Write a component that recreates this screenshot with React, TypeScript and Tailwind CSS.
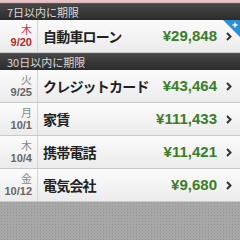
const sections = [
  {
    title: '7日以内に期限',
    items: [{ day: '木', date: '9/20', name: '自動車ローン', amount: '¥29,848', urgent: true }],
  },
  {
    title: '30日以内に期限',
    items: [
      { day: '火', date: '9/25', name: 'クレジットカード', amount: '¥43,464' },
      { day: '月', date: '10/1', name: '家賃', amount: '¥111,433' },
      { day: '木', date: '10/4', name: '携帯電話', amount: '¥11,421' },
      { day: '金', date: '10/12', name: '電気会社', amount: '¥9,680' },
    ],
  },
];

type Item = { day: string; date: string; name: string; amount: string; urgent?: boolean };

function Chevron() {
  return (
    <svg width="6" height="9" viewBox="0 0 6 9" className="shrink-0">
      <polyline points="1,1 4.5,4.5 1,8" fill="none" stroke="#333" strokeWidth="2" />
    </svg>
  );
}

function Row({ item, first }: { item: Item; first: boolean }) {
  return (
    <div className="relative flex h-[33px] border-b border-[#c9c9c9] bg-gradient-to-b from-[#fbfbfb] to-[#ebebeb]">
      <div className="flex w-[38px] shrink-0 flex-col items-end justify-center border-r border-[#d6d6d6] pr-[5px] leading-none">
        <span
          className={`text-[11px] font-['Noto_Sans_CJK_JP',sans-serif] ${item.urgent ? 'text-[#c23a3a]' : 'text-[#8a8a8a]'}`}
        >
          {item.day}
        </span>
        <span
          className={`mt-[2px] text-[11px] font-bold font-['Liberation_Sans',sans-serif] ${item.urgent ? 'text-[#b02a2a]' : 'text-[#666]'}`}
        >
          {item.date}
        </span>
      </div>
      <div className="flex flex-1 items-center pl-[5px] pr-[8px]">
        <span className="flex-1 text-[14px] font-semibold tracking-[-0.8px] text-[#222] font-['Noto_Sans_CJK_JP',sans-serif]">
          {item.name}
        </span>
        <span className="mr-[9px] text-[15px] font-bold text-[#3b7d27] font-['Liberation_Sans',sans-serif]">
          {item.amount}
        </span>
        <Chevron />
      </div>
      {first && item.urgent && (
        <svg width="17" height="17" viewBox="0 0 17 17" className="absolute right-0 top-0">
          <polygon points="0,0 17,0 17,17" fill="#2b8fd2" />
          <path d="M12 2.5v5M9.5 5h5" stroke="#fff" strokeWidth="1.3" />
        </svg>
      )}
    </div>
  );
}

export default function App() {
  return (
    <div className="flex h-[240px] w-[240px] flex-col overflow-hidden bg-[#a7a7a7]">
      <div className="h-[3px] bg-[#e9c4c6]" />
      <div className="shadow-[0_2px_4px_rgba(0,0,0,0.45)]">
        {sections.map((s) => (
          <div key={s.title}>
            <div className="flex h-[17px] items-center border-t border-[#555] bg-gradient-to-b from-[#474747] to-[#2b2b2b] pl-[7px] text-[11px] text-[#dadada] font-['Noto_Sans_CJK_JP',sans-serif]">
              {s.title}
            </div>
            {s.items.map((it, i) => (
              <Row key={it.name} item={it} first={i === 0} />
            ))}
          </div>
        ))}
      </div>
      <div className="flex-1 bg-[#a8a8a8] bg-[radial-gradient(circle,#959595_0.8px,transparent_1px)] bg-[length:3px_3px]" />
    </div>
  );
}
